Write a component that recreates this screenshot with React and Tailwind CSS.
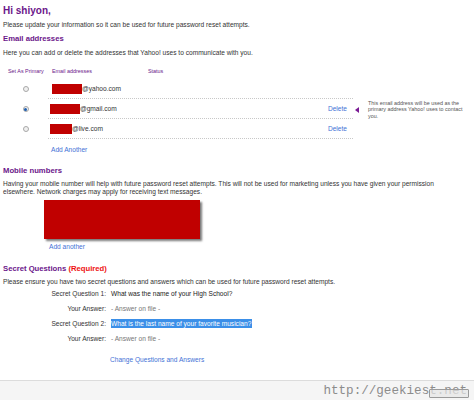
export default function App() {
  const font = "font-['Liberation_Sans',Arial,sans-serif]";
  const purple = "text-[#6b168a]";
  const link = "text-[#3f72d6]";
  const Radio = ({ on }) => (
    <span className="w-[6px] h-[6px] rounded-full border border-[#a8a8a8] bg-[#f0f0f0] flex items-center justify-center">
      {on && <span className="w-[3px] h-[3px] rounded-full bg-[#1f5fb0]" />}
    </span>
  );
  const rows = [
    { on: false, w: 30, dom: "@yahoo.com", del: false },
    { on: true, w: 30, dom: "@gmail.com", del: true, shift: -2 },
    { on: false, w: 22, dom: "@live.com", del: true, shift: -2 },
  ];
  return (
    <div className={`relative w-[474px] h-[400px] bg-white overflow-hidden text-[#333] ${font}`}>
      <div className="pl-[3px]">
        <div className={`h-[21px] leading-[21px] text-[10px] font-bold ${purple}`}>Hi shiyon,</div>
        <div className="h-[8px] leading-[8px] text-[6.6px]">
          Please update your information so it can be used for future password reset attempts.
        </div>
        <div className={`h-[20px] leading-[20px] text-[7.7px] font-bold ${purple}`}>Email addresses</div>
        <div className="h-[8px] leading-[8px] text-[6.6px]">
          Here you can add or delete the addresses that Yahoo! uses to communicate with you.
        </div>

        <div className={`mt-[9px] h-[10px] leading-[10px] flex text-[5.4px] ${purple}`}>
          <div className="w-[45px] pl-[5px]">Set As Primary</div>
          <div className="w-[100px] pl-[4px]">Email addresses</div>
          <div>Status</div>
        </div>

        <div className="mt-[3px] flex">
          <div className="w-[350px]">
            {rows.map((r, i) => (
              <div key={i} className="flex h-[20px]">
                <div className="w-[45px] flex items-center justify-center">
                  <Radio on={r.on} />
                </div>
                <div className="w-[305px] flex items-center justify-between pr-[6px] text-[6.6px] border-b border-dotted border-[#c8c8c8]">
                  <div className="flex items-center" style={{ marginLeft: 4 + (r.shift || 0) }}>
                    <span className="h-[10px] bg-[#c00000]" style={{ width: r.w }} />
                    <span>{r.dom}</span>
                  </div>
                  {r.del && <span className={link}>Delete</span>}
                </div>
              </div>
            ))}
          </div>
          <div className="flex items-start pt-[21px] pl-[2px]">
            <svg width="5" height="6" viewBox="0 0 5 6" className="mt-[7px]">
              <polygon points="0,3 4,0 4,6" fill="#7a1a94" />
            </svg>
            <div className="ml-[8px] w-[106px] text-[5.4px] leading-[6.4px] text-[#555]">
              This email address will be used as the primary address Yahoo! uses to contact you.
            </div>
          </div>
        </div>

        <div className={`mt-[5px] ml-[48px] h-[12px] leading-[12px] text-[6.6px] ${link}`}>Add Another</div>

        <div className={`mt-[5px] h-[19px] leading-[19px] text-[7.7px] font-bold ${purple}`}>Mobile numbers</div>
        <div className="text-[6.6px] leading-[8px] w-[442px]">
          Having your mobile number will help with future password reset attempts. This will not be used for marketing unless you have given your permission elsewhere. Network charges may apply for receiving text messages.
        </div>
        <div className="mt-[4px] ml-[41px] w-[156px] h-[39px] bg-[#c00000] shadow-[2px_2px_2px_#7a7a7a]" />
        <div className={`mt-[2px] ml-[46px] h-[12px] leading-[12px] text-[6.6px] ${link}`}>Add another</div>

        <div className="mt-[6px] h-[19px] leading-[19px] text-[7.7px] font-bold">
          <span className={purple}>Secret Questions </span>
          <span className="text-[#ee1111]">(Required)</span>
        </div>
        <div className="h-[8px] leading-[8px] text-[6.6px]">
          Please ensure you have two secret questions and answers which can be used for future password reset attempts.
        </div>

        <div className="grid grid-cols-[103px_1fr] gap-x-[5px] text-[6.6px]">
          {[
            ["Secret Question 1:", "What was the name of your High School?", "q"],
            ["Your Answer:", "- Answer on file -", "a"],
            ["Secret Question 2:", "What is the last name of your favorite musician?", "h"],
            ["Your Answer:", "- Answer on file -", "a"],
          ].map(([l, v, t], i) => (
            <div key={i} className="contents">
              <div className="h-[15px] leading-[15px] text-right text-[#333]">{l}</div>
              <div className="h-[15px] flex items-center">
                {t === "h" ? (
                  <span className="bg-[#3b8fe8] text-white leading-[9px] pr-[1px]">{v}</span>
                ) : (
                  <span className={t === "a" ? "text-[#777]" : "text-[#222]"}>{v}</span>
                )}
              </div>
            </div>
          ))}
        </div>

        <div className={`mt-[8px] ml-[107px] h-[12px] leading-[12px] text-[6.6px] ${link}`}>Change Questions and Answers</div>
      </div>

      <div className="mt-[14px] h-[20px] border-t border-[#dcdcdc] bg-[#f5f5f5] flex justify-end items-center pr-[7px]">
        <span className="font-['Liberation_Mono',monospace] text-[12.6px] leading-[16px] text-[#8c8c8c]">http://geekiest.net</span>
      </div>
      <div className="absolute left-[429px] top-[389px] w-[40px] h-[9px] border border-[#9a9a9a] bg-[#e6e6e6]/70 rounded-[1px]" />
    </div>
  );
}
